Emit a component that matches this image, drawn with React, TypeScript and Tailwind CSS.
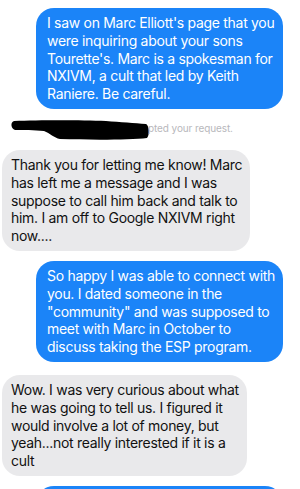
import React from "react";

const font = { fontFamily: '"Inter", "Liberation Sans", sans-serif' };

function Lines({ lines }: { lines: string[] }) {
  return (
    <>
      {lines.map((l, i) => (
        <div key={i} className="whitespace-nowrap">{l}</div>
      ))}
    </>
  );
}

export default function App() {
  return (
    <div className="w-[300px] h-[489px] bg-white overflow-hidden flex flex-col" style={font}>
      <div className="ml-[36px] mt-[8px] w-[247px] shrink-0 rounded-[18px] bg-[#1b84f8] pl-[11px] py-[6px] text-[14px] leading-[17.8px] text-white tracking-[-0.3px]">
        <Lines lines={["I saw on Marc Elliott's page that you", "were inquiring about your sons", "Tourette's. Marc is a spokesman for", "NXIVM, a cult that led by Keith", "Raniere. Be careful."]} />
      </div>
      <div className="relative h-[41px] shrink-0">
        <svg className="absolute left-[10px] top-[11px]" width="140" height="21" viewBox="0 0 140 21">
          <path d="M4 1 C 30 0, 70 0, 96 1 C 110 2, 125 3, 136 4 C 139 5, 140 15, 137 18 C 120 20, 80 20, 50 19 C 44 18, 40 13, 34 11 C 25 10, 12 10, 5 10 C 1 9, 0 2, 4 1 Z" fill="#000" />
        </svg>
        <span className="absolute left-[148px] top-[12px] text-[10px] leading-[14px] text-[#b8b8bc] tracking-[-0.1px]">pted your request.</span>
      </div>
      <div className="ml-[2px] w-[248px] shrink-0 rounded-[18px] bg-[#e9e9eb] pl-[9px] py-[6px] text-[14px] leading-[17.8px] text-[#111] tracking-[-0.3px]">
        <Lines lines={["Thank you for letting me know! Marc", "has left me a message and I was", "suppose to call him back and talk to", "him. I am off to Google NXIVM right", "now...."]} />
      </div>
      <div className="ml-[36px] mt-[10px] w-[247px] shrink-0 rounded-[18px] bg-[#1b84f8] pl-[11px] py-[6px] text-[14px] leading-[17.8px] text-white tracking-[-0.3px]">
        <Lines lines={["So happy I was able to connect with", "you. I dated someone in the", "\"community\" and was supposed to", "meet with Marc in October to", "discuss taking the ESP program."]} />
      </div>
      <div className="ml-[2px] mt-[13px] w-[245px] shrink-0 rounded-[18px] bg-[#e9e9eb] pl-[9px] py-[6px] text-[14px] leading-[17.8px] text-[#111] tracking-[-0.3px]">
        <Lines lines={["Wow. I was very curious about what", "he was going to tell us. I figured it", "would involve a lot of money, but", "yeah...not really interested if it is a", "cult"]} />
      </div>
      <div className="ml-[36px] mt-[10px] w-[247px] h-[40px] shrink-0 rounded-[18px] bg-[#1b84f8]" />
    </div>
  );
}
